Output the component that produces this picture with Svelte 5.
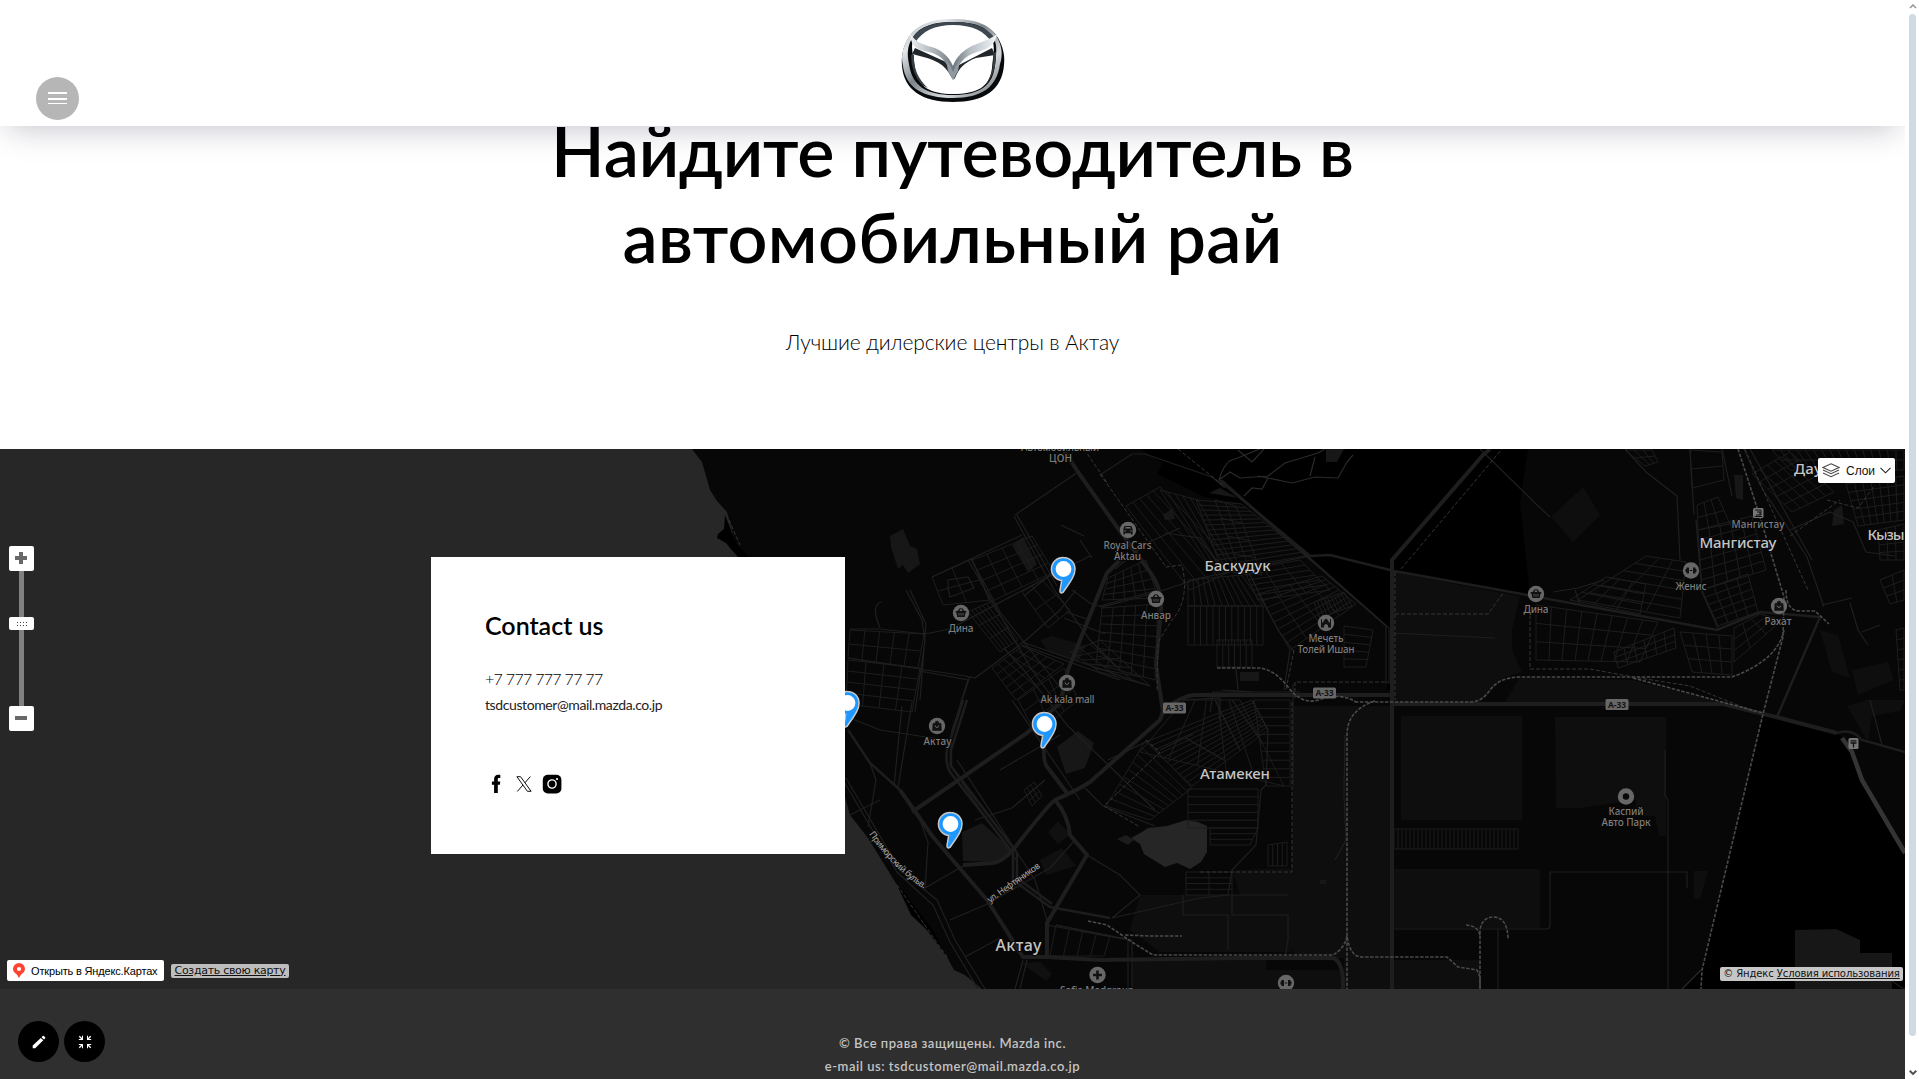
<script lang="ts">
  type Pt = [number, number];

  // Evenly spaced lines across a quadrilateral: n along one direction, m along the other.
  function grid(a: Pt, b: Pt, c: Pt, d: Pt, n: number, m: number): string {
    const mix = (p: Pt, q: Pt, t: number) =>
      `${(p[0] + (q[0] - p[0]) * t).toFixed(1)},${(p[1] + (q[1] - p[1]) * t).toFixed(1)}`;
    let out = '';
    for (let i = 0; i <= n; i++) out += `M${mix(a, b, i / n)}L${mix(d, c, i / n)}`;
    for (let j = 0; j <= m; j++) out += `M${mix(a, d, j / m)}L${mix(b, c, j / m)}`;
    return out;
  }

  const districts = [
    grid([1126, 506], [1160, 487], [1238, 568], [1190, 590], 5, 1),
    grid([1160, 490], [1198, 500], [1236, 570], [1216, 575], 5, 1),
    grid([1196, 500], [1242, 504], [1306, 556], [1222, 570], 1, 14),
    grid([1215, 500], [1236, 506], [1262, 575], [1240, 572], 2, 4),
    grid([1188, 580], [1242, 575], [1263, 606], [1188, 606], 11, 1),
    grid([1188, 606], [1263, 606], [1263, 645], [1188, 645], 12, 1),
    grid([1217, 640], [1252, 640], [1252, 667], [1217, 667], 6, 1),
    grid([1244, 570], [1300, 560], [1330, 590], [1258, 600], 3, 6),
    grid([1258, 594], [1322, 576], [1356, 604], [1290, 650], 4, 8),
    grid([1314, 602], [1344, 592], [1352, 606], [1320, 618], 9, 1),
    grid([1344, 626], [1373, 630], [1366, 667], [1344, 667], 1, 5),
    grid([1102, 608], [1158, 604], [1155, 680], [1096, 664], 5, 7),
    grid([1108, 578], [1146, 560], [1158, 598], [1102, 600], 5, 4),
    grid([1100, 640], [1070, 652], [1100, 672], [1150, 686], 3, 5),
    grid([972, 560], [1032, 536], [1054, 572], [990, 602], 4, 4),
    grid([932, 577], [972, 559], [990, 600], [943, 605], 2, 2),
    grid([968, 612], [990, 602], [1018, 640], [1000, 652], 6, 3),
    grid([1022, 592], [1042, 580], [1070, 610], [1048, 628], 2, 2),
    grid([850, 630], [924, 634], [918, 668], [848, 658], 5, 2),
    grid([848, 660], [920, 668], [912, 712], [846, 704], 4, 4),
    grid([992, 668], [1022, 646], [1064, 664], [1016, 700], 5, 5),
    grid([1018, 700], [1064, 668], [1078, 700], [1036, 734], 3, 3),
    grid([1184, 700], [1240, 700], [1284, 786], [1140, 752], 5, 1),
    grid([1146, 742], [1252, 700], [1268, 730], [1192, 786], 1, 11),
    grid([1146, 740], [1192, 788], [1150, 820], [1106, 806], 1, 9),
    grid([1254, 700], [1290, 700], [1290, 786], [1266, 786], 1, 10),
    grid([1188, 789], [1258, 789], [1258, 828], [1188, 828], 1, 5),
    grid([1210, 828], [1258, 828], [1250, 845], [1210, 845], 1, 3),
    grid([1186, 872], [1232, 872], [1232, 895], [1186, 895], 2, 4),
    grid([1268, 845], [1287, 842], [1287, 866], [1268, 866], 4, 1),
    grid([1024, 790], [1034, 782], [1042, 796], [1032, 806], 3, 3),
    grid([1056, 925], [1110, 936], [1104, 956], [1050, 956], 4, 1),
    grid([1394, 829], [1518, 829], [1518, 849], [1394, 849], 31, 1),
    grid([1536, 605], [1658, 622], [1640, 662], [1536, 660], 8, 3),
    grid([1646, 556], [1686, 562], [1680, 618], [1578, 600], 3, 6),
    grid([1606, 577], [1646, 584], [1640, 614], [1570, 600], 3, 3),
    grid([1614, 652], [1674, 628], [1676, 648], [1618, 668], 6, 3),
    grid([1680, 632], [1732, 636], [1732, 675], [1692, 672], 4, 3),
    grid([1734, 628], [1760, 614], [1782, 620], [1734, 662], 3, 3),
    grid([1697, 505], [1718, 497], [1730, 524], [1698, 530], 3, 2),
    grid([1698, 530], [1752, 516], [1766, 570], [1702, 590], 5, 6),
    grid([1702, 590], [1748, 574], [1758, 612], [1718, 626], 4, 5),
    grid([1690, 450], [1722, 452], [1724, 480], [1692, 488], 1, 2),
    grid([1752, 474], [1790, 452], [1834, 492], [1792, 512], 5, 5),
    grid([1772, 450], [1904, 450], [1904, 470], [1790, 470], 16, 2),
    grid([1846, 484], [1904, 476], [1904, 520], [1858, 526], 7, 5),
    grid([1878, 530], [1904, 524], [1904, 560], [1880, 560], 3, 4),
    grid([1880, 580], [1904, 570], [1904, 600], [1890, 604], 2, 3),
    grid([1896, 630], [1904, 628], [1904, 690], [1900, 690], 1, 6),
    grid([1625, 450], [1652, 450], [1658, 462], [1645, 466], 3, 2),
  ];

  const thinRoads = [
    'M1015 515L1078 472M1014 516L1053 588L1090 640L1118 668M1017 515L1057 586',
    'M932 577L1022 535M968 560L1032 670L1060 708M971 559L1000 612L1070 700',
    'M850 629H880L925 634L950 629L1042 580L1090 556M906 590L922 620L925 640L915 712M910 590L926 624L920 700',
    'M882 602Q870 604 880 628M948 588V580L968 577L974 588L950 597Z',
    'M848 658L965 676L975 678L1026 640L1060 610L1076 590M920 671L968 680L960 705',
    'M1072 590L1090 603L1102 607L1158 592L1200 578L1310 556M1100 606L1158 590',
    'M1022 642L1150 686M1022 645L1120 680M1004 648L1022 668L1068 726L1155 810',
    'M970 676L952 730L950 765L982 812L1016 860',
    'M845 716L880 730L946 740M912 702L898 788M902 706L894 786M870 763L876 780L868 827',
    'M846 778L900 870L937 900L955 940L985 989M843 780L897 872L933 905L950 942L978 989',
    'M920 820L928 842L925 890M925 888L965 865M950 920L985 905L1050 868L1075 840M965 957L1000 938',
    'M957 760L1035 880L1047 920M975 820L1012 808L1045 780M1000 770L1060 735M1012 700L1080 800',
    'M1085 788L1103 806L1155 826M1087 855L1120 875L1140 895L1112 918L1200 898L1228 895L1232 870L1256 845L1261 790L1266 785L1268 730L1252 700',
    'M1047 925L1128 940V989M1132 940V989M1056 925L1132 940M1023 960L1015 989M1027 960L1020 989',
    'M1183 895V915H1228V950M1288 895H1232V915H1288V940L1285 958',
    'M1100 475L1132 454H1145L1212 477L1225 488M1219 480L1386 626V684M1222 480L1389 628V684',
    'M1165 533L1200 538L1222 570L1250 575L1278 630L1294 652M1115 569L1147 543L1180 528',
    'M1390 633L1495 638M1480 449L1536 504L1550 517M1625 449L1646 472L1677 496L1680 560',
    'M1690 449L1694 515M1696 520L1702 592L1718 628M1722 449L1732 496M1744 449L1760 485L1807 557L1824 607M1750 449L1812 560',
    'M1790 530L1830 512L1853 522L1866 552L1895 556M1822 605L1852 598M1850 603L1858 630L1868 645M1862 632L1880 625',
    'M1553 592L1578 588L1604 580M1575 590L1580 605M1392 929H1546Q1550 929 1550 925V872H1687V888M1665 750V795L1668 800V989',
    'M1345 735L1344 794L1346 840L1335 860M1498 929V989M1870 700L1882 745M1892 981L1902 988H1905',
    'M1183 700L1220 698V720M1193 734L1160 750M1108 760L1150 740M1232 700L1262 742M1215 700L1240 750M1186 738L1224 760',
    'M850 815L880 800M1061 525L1084 536M1080 540L1092 558M1024 596L1050 575M1064 618L1105 634M1066 612L1090 620',
    'M1210 712L1213 692H1300M1222 690L1256 692M1293 684V785M1236 669L1238 690M1290 650L1284 690',
  ];

  const wideRoads = [
    'M1063 449L1080 475L1117 527L1150 572Q1163 590 1161 610L1156 665L1163 712L1160 720L1090 782Q1078 790 1055 800Q1047 806 1013 850Q1002 862 993 863L963 865',
    'M912 812L1027 733L1060 703L1068 670L1107 573L1123 557',
    'M900 790L933 837L987 900L1023 957H1047L1100 960L1240 958H1333Q1344 962 1343 989',
    'M1044 747Q1043 763 1048 768L1067 793M1055 800Q1068 815 1070 835L1087 855L1047 923V957',
    'M1163 712Q1180 695 1197 695H1393M1392 704H1723L1780 718L1837 733',
    'M1392 989V560L1483 455L1490 449',
  ];
  const midRoads = [
    'M848 730L870 763L900 790M963 700L947 750Q945 764 950 772L1013 853V880L1050 907L1110 918',
    'M967 700L951 750V766L1017 853V878L1052 904',
    'M1310 556L1330 555L1394 571L1500 590L1717 630L1760 612L1820 617L1777 717',
    'M1219 480L1310 556M1837 733Q1852 728 1862 740L1905 752',
  ];
  const rails = [
    'M1738 449L1760 517L1784 597L1783 637L1763 714L1702 970L1701 989',
    'M1784 630Q1778 660 1732 677H1520Q1500 677 1490 690Q1482 702 1470 702H1355',
    'M1217 668H1260Q1275 670 1288 687Q1302 705 1318 700Q1340 692 1356 702',
    'M1633 678L1763 713M1786 590Q1786 611 1800 611H1815L1829 624M1375 701Q1347 710 1347 735V989',
    'M1088 921L1107 925L1135 944L1153 955H1333Q1345 948 1347 936Q1350 957 1362 957H1447L1458 967L1477 970L1480 977V989',
    'M1480 989V930Q1482 917 1494 917Q1508 918 1508 940M1480 935Q1477 925 1465 925M1125 935L1150 936H1182',
  ];
  const dashes = [
    'M1178 449L1225 487M1084 449L1108 484M1100 474L1166 567L1182 565Q1190 600 1172 620L1158 642L1157 690',
    'M1401 569L1502 449M1395 614H1488L1504 592M1530 615V669H1590L1633 677L1690 686L1755 712',
    'M1292 702V872H1200M1295 698V682H1388M1294 650L1286 690M1745 449L1775 517L1808 590M1790 536L1840 500',
    'M1146 740L1160 752L1104 806L1140 827M897 885L947 957M729 520L740 545M1827 500L1858 508L1875 485M1395 572V700',
  ];

  const pois: { x: number; y: number; icon: string }[] = [
    { x: 961, y: 613, icon: 'basket' }, { x: 1128, y: 530, icon: 'car' }, { x: 1156, y: 599, icon: 'basket' },
    { x: 1067, y: 683, icon: 'bag' }, { x: 937, y: 726, icon: 'bag' }, { x: 1326, y: 623, icon: 'mosque' },
    { x: 1536, y: 594, icon: 'basket' }, { x: 1691, y: 570.5, icon: 'gym' }, { x: 1779, y: 606, icon: 'bag' },
    { x: 1626, y: 796.5, icon: 'dot' }, { x: 1097.5, y: 975, icon: 'plus' }, { x: 1286, y: 983, icon: 'gym' },
  ];
  const smallLabels: [string, number, number, number][] = [
    ['Автомобильный', 1060, 451, 78], ['ЦОН', 1060.5, 461.5, 23],
    ['Дина', 961, 631.5, 25], ['Royal Cars', 1127.5, 549, 48], ['Aktau', 1127.5, 560, 27],
    ['Анвар', 1156, 618.5, 30], ['Ak kala mall', 1067.5, 702.5, 54], ['Актау', 937.5, 745, 28],
    ['Мечеть', 1326, 642, 35], ['Толей Ишан', 1326, 653, 57], ['Дина', 1536, 612.5, 25],
    ['Женис', 1691, 590, 31], ['Рахат', 1778, 624.5, 27], ['Мангистау', 1758, 527.5, 53],
    ['Каспий', 1626, 815, 35], ['Авто Парк', 1626, 826, 49], ['Sofia Medgroup', 1097, 993.5, 74],
  ];
  const bigLabels: [string, number, number, number, number][] = [
    ['Баскудук', 1237.5, 571, 66, 15], ['Мангистау', 1738, 548, 77, 15], ['Атамекен', 1235, 779, 70, 15],
    ['Актау', 1018.5, 951, 46, 16], ['Кызы', 1886, 539.5, 37, 15], ['Даулет', 1820, 473.5, 52, 15],
  ];
  const shields: Pt[] = [[1174.5, 708], [1324.5, 693], [1617, 704.5]];
  const pins: Pt[] = [[1063.5, 569], [847.5, 703], [1044.5, 724], [950.5, 824]];
</script>

<div class="window">
  <main class="page">
    <header class="topbar">
      <button class="burger" aria-label="Меню"><i></i><i></i><i></i></button>
      <svg class="logo" viewBox="0 0 106 86" width="106" height="86" role="img" aria-label="Mazda">
        <defs>
          <linearGradient id="chrome" x1="0" y1="0" x2="1" y2="1">
            <stop offset="0" stop-color="#a9b0b6" /><stop offset=".22" stop-color="#e3e7ea" />
            <stop offset=".45" stop-color="#7d858c" /><stop offset=".7" stop-color="#d7dbde" /><stop offset="1" stop-color="#5c646a" />
          </linearGradient>
          <linearGradient id="wing" x1="0" y1="0" x2="1" y2="0">
            <stop offset="0" stop-color="#eef1f3" /><stop offset=".3" stop-color="#a6adb3" /><stop offset=".5" stop-color="#6f777e" />
            <stop offset=".7" stop-color="#b9c0c6" /><stop offset="1" stop-color="#f2f6f8" />
          </linearGradient>
        </defs>
        <path d="M53 2C78 2 92 9 98 20C103 29 105 37 104 47C102 72 84 84 53 84C22 84 4 72 2 48C1 36 4 27 9 19C17 8 31 2 53 2ZM53 5C33 5 21 11 14 20C10 26 13 37 15 50C18 69 30 76 53 76C77 76 90 69 92 50C93 38 96 27 91 20C84 10 74 5 53 5Z" fill="#08090a" fill-rule="evenodd" />
        <path d="M53 1C78 1 91 8 97 19C102 28 103 37 100 46C97 69 82 80 53 80C23 80 6 70 3 48C0 34 5 26 9 18C17 7 31 1 53 1ZM53 4C34 4 20 8 13 19C7 28 7 36 9 46C12 67 25 77 53 77C81 77 93 67 95 47C96 36 98 27 93 19C86 9 75 4 53 4Z" fill="url(#chrome)" fill-rule="evenodd" />
        <path d="M53 4C33 4 20 9 12 20L15 25C22 13 35 7 53 7C72 7 85 13 92 25L95 20C86 9 74 4 53 4Z" fill="#3e474f" />
        <path d="M12 36L15 30L46 44L53 62L59 47L92 30L95 37L76 40C65 44 59 50 55 60L53 62L49 55C42 43 28 40 12 36Z" fill="#20262b" />
        <path d="M10 15C11 27 14 31 29 34C43 37 48 47 53 59C58 46 64 38 77 34C91 30 95 26 97 16C90 22 77 25 70 29C61 34 56 40 53 48C48 36 38 30 28 28C19 25 14 22 10 15Z" fill="url(#wing)" />
        <path d="M46 42Q51 48 53 54V62L48 53ZM60 42Q55 48 53 54V62L58 53Z" fill="#929aa1" />
        <path d="M11 37Q11 55 22 67L28 70Q13 57 14 37ZM96 34Q97 55 84 69Q95 55 93 35Z" fill="#363d43" />
      </svg>
    </header>

    <section class="intro">
      <h1><span class="first">Найдите путеводитель в</span><span class="second">автомобильный рай</span></h1>
      <p>Лучшие дилерские центры в Актау</p>
    </section>

    <section class="map">
      <svg class="canvas" viewBox="0 449 1905 540" width="1905" height="540">
        <rect y="449" width="1905" height="540" fill="#272727" />
        <path fill="#070707" d="M692 449L702 462L710 490L717 501L727 512L731 526L736 545L748 557L800 740L845 797L850 815L868 838L897 885L902 893L909 910L927 930L947 957L954 970L965 975L982 989H1905V449Z" />
        <path fill="#000" d="M725 515L737 545L749 557H738L730 548L726 543L717 538L718 534L724 529ZM897 885L902 890L915 907L933 930L947 957L927 930L911 915Z" />
        <path fill="#000" d="M1140 449H1528L1520 503L1530 595L1394 571V690H1387V626L1310 557L1240 503L1205 497L1157 474L1162 463L1147 453ZM1394 560V571Z" />
        <path fill="#000" d="M1764 713L1837 733L1846 740L1862 780L1905 853V989H1682L1701 970Z" />
        <g fill="#0e0e0e">
          <path d="M1394 572L1502 593L1520 596L1512 630V650L1522 672L1505 677L1480 702H1394ZM1293 706H1390V989H1344V958H1300L1290 950L1286 895H1240L1232 870L1292 868ZM1140 895H1290V952H1160L1130 930Z" />
          <path d="M1401 716H1522V820H1401ZM1555 717H1666V836H1659L1655 816H1636V800L1580 808H1556ZM1394 869H1540V928H1394ZM1394 960H1480V989H1394ZM1132 960H1266V970H1343V989H1132Z" />
          <path d="M1551 517L1583 487L1600 515L1573 542ZM1520 677L1633 680L1730 704H1504ZM1847 706L1867 700H1905L1900 711L1872 716L1868 742ZM1820 630L1838 635L1850 678L1832 672ZM1852 670L1888 662L1894 680L1858 695ZM1694 871H1708L1700 899H1694Z" />
        </g>
        <g fill="#171717">
          <path d="M890 536L903 529L910 546L917 549L920 564L908 573L903 565L898 569L891 547Z" />
          <path d="M1012 545L1023 537L1037 564L1028 572ZM1057 747L1078 731L1094 743L1085 768L1066 774ZM962 832L982 823L1012 850L1000 862L963 861ZM1163 515L1172 509L1175 519L1165 520ZM1209 493L1220 488L1238 498ZM1326 449H1344L1337 462H1326ZM1734 475H1743V500L1736 498ZM1834 510L1842 505L1844 524L1832 526ZM1320 880H1326V884H1320ZM1795 930L1836 929L1860 940V953H1892V989H1795ZM1240 672H1259V681H1240Z" />
        </g>
        <path fill="#101010" d="M1040 640L1052 636L1086 646L1078 662L1048 651ZM1048 832L1058 821L1070 834L1058 844ZM1040 860L1062 848L1076 866L1046 875ZM1021 963L1040 962L1052 974L1046 981Z" />
        <path fill="#262626" d="M1131 838L1142 832L1148 828L1167 826L1186 820L1198 822L1207 826V852L1201 862L1190 869L1177 863L1165 867L1144 854L1140 844Z" />
        <path fill="#1c1c1c" d="M1117 839L1126 835L1134 840L1128 845Z" />
        <g fill="none">
          {#each districts as d}<path class="block" {d} />{/each}
          {#each thinRoads as d}<path class="thin" {d} />{/each}
          <path class="trail" d="M1219 480Q1225 460 1235 459L1260 449M1219 480L1230 472L1240 478L1268 476L1285 463L1318 453L1325 449M1258 476L1292 483L1315 477L1338 478L1347 462L1353 455M1268 478L1262 489L1252 488L1244 496M1310 476L1315 457M1238 450L1252 462L1264 449" />
          {#each midRoads as d}<path class="mid" {d} />{/each}
          {#each wideRoads as d}<path class="wide" {d} />{/each}
          <path d="M1842 738L1852 752L1862 780L1905 853" stroke="#343434" stroke-width="4.5" />
          {#each dashes as d}<path class="dash" {d} />{/each}
          {#each rails as d}<path class="rail" {d} />{/each}
          <path class="trail" d="M1701 970L1682 989" />
        </g>

        <defs>
          <path id="shore" d="M869 834Q895 872 928 891" />
          <path id="oilers" d="M990 903L1045 864" />
        </defs>
        <g class="street">
          <text><textPath href="#shore" textLength="78">Приморский бульв.</textPath></text>
          <text><textPath href="#oilers" textLength="62">ул. Нефтяников</textPath></text>
        </g>

        {#each pois as p}
          <g transform="translate({p.x} {p.y})">
            <circle r="8.2" fill="#676767" />
            {#if p.icon === 'basket'}
              <path d="M-5.3-2H5.3V-.5H4.6L3.7 4H-3.7L-4.6-.5H-5.3ZM-3.5-2L-1-5L0-4.5L-1.6-2ZM3.5-2L1-5L0-4.5L1.6-2Z" fill="#111" />
              <path d="M-2 0V2.5M0 0V2.5M2 0V2.5" stroke="#676767" stroke-width=".7" />
            {:else if p.icon === 'bag'}
              <path d="M-4-2.5H4L4.4 4.5H-4.4ZM-2-2.5Q-2-5 0-5Q2-5 2-2.5" fill="#111" stroke="#111" stroke-width=".6" />
              <path d="M-1.8-.5Q-1.5 1.5 0 1.5Q1.5 1.5 1.8-.5" stroke="#676767" fill="none" />
            {:else if p.icon === 'car'}
              <path d="M-3.5-4H3.5L4.6-1V4.5H3V3.2H-3V4.5H-4.6V-1Z" fill="#111" />
              <path d="M-3-1.4L-2.3-3H2.3L3-1.4ZM-3.8.4H-2V1.6H-3.8ZM2 .4H3.8V1.6H2Z" fill="#676767" />
            {:else if p.icon === 'mosque'}
              <path d="M-5-4H-4V-.5H-3Q-2.500-3 0-4.500Q2.500-3 3-.5H4V-4H5V4.500H2V2.500Q0-.5-2 2.500V4.500H-5Z" fill="#111" />
            {:else if p.icon === 'gym'}
              <path d="M-5.5-1.5H-4.5V-3H-2V3H-4.5V1.5H-5.5ZM5.5-1.5H4.5V-3H2V3H4.5V1.5H5.5ZM-1.2-.6H1.2V.6H-1.2Z" fill="#111" />
            {:else if p.icon === 'plus'}
              <path d="M-4.5 0H4.5M0-4.5V4.5" stroke="#111" stroke-width="2.6" />
            {:else}
              <circle r="3.2" fill="#080808" />
            {/if}
          </g>
        {/each}
        <rect x="1753" y="508" width="10.5" height="10" rx="1.5" fill="#777" />
        <path d="M1755 510H1761V515H1756M1754.500 516.500H1762M1757 512H1760V515" stroke="#111" fill="none" />
        <rect x="1848.500" y="738" width="10" height="11" rx="1.500" fill="#777" />
        <path d="M1850.500 740.800H1856.500M1850.500 743H1856.500M1853.500 743V747.500" stroke="#111" stroke-width="1.300" />

        <g class="small">
          {#each smallLabels as [t, x, y, w]}<text {x} {y} textLength={w}>{t}</text>{/each}
        </g>
        <g class="big">
          {#each bigLabels as [t, x, y, w, s]}<text {x} {y} textLength={w} font-size={s}>{t}</text>{/each}
        </g>
        {#each shields as [x, y]}
          <rect x={x - 11.5} y={y - 5.5} width="23" height="11" rx="1.500" fill="#676767" />
          <text class="shield" {x} y={y + 3.200} textLength="18">A-33</text>
        {/each}

        {#each pins as [x, y]}
          <g transform="translate({x} {y})">
            <path d="M0-10.800A10.800 10.800 0 0 1 10.800 0C10.800 7 5 14-1 22.800Q-3.200 24-2.700 21Q-1.500 15-1 10.800A10.800 10.800 0 0 1 0-10.800Z" fill="#1e98ff" stroke="#c9c9c9" stroke-width="3" paint-order="stroke" />
            <circle r="7.900" fill="#fff" />
          </g>
        {/each}
      </svg>

      <aside class="card">
        <h2>Contact us</h2>
        <div class="phone">+7 777 777 77 77</div>
        <div class="mail">tsdcustomer@mail.mazda.co.jp</div>
        <div class="social">
          <svg viewBox="0 0 20 20" width="20" height="20"><path d="M8.100 19V10.800H5.900V7.500H8.100V5.200C8.100 2.400 9.600.8 12.200.8H14.300V4.100H12.900C12 4.100 11.800 4.500 11.800 5.300V7.500H14.300L13.900 10.800H11.800V19Z" /></svg>
          <svg viewBox="0 0 20 20" width="20" height="20"><path d="M2.900 2.700H6.600L17.100 17.300H13.400ZM16.400 2.500L10.800 8.900M9.100 10.900L3.200 17.500" fill="none" stroke="#111" stroke-width="1" /></svg>
          <svg viewBox="0 0 20 20" width="20" height="20"><rect x=".8" y=".8" width="18.600" height="18.600" rx="5" /><circle cx="10" cy="10" r="4.100" fill="none" stroke="#fff" stroke-width="1.400" /><circle cx="15" cy="5" r="1.100" fill="#fff" /></svg>
        </div>
      </aside>

      <div class="zoomer">
        <button aria-label="Приблизить"><svg viewBox="0 0 12 12" width="12" height="12"><path d="M6 0V12M0 6H12" stroke="#686868" stroke-width="4" /></svg></button>
        <span class="track"><span class="handle"><svg viewBox="0 0 10 4" width="10" height="4"><path d="M0 .5H10M0 3.500H10" stroke="#444" stroke-dasharray="1 2" /></svg></span></span>
        <button aria-label="Отдалить"><svg viewBox="0 0 12 12" width="12" height="12"><path d="M0 6H12" stroke="#686868" stroke-width="4" /></svg></button>
      </div>

      <button class="layers">
        <svg viewBox="0 0 18 15" width="18" height="15"><path d="M9 .8L17 4.500L9 8.200L1 4.500ZM1 7L9 10.700L17 7M1 10L9 13.700L17 10" fill="none" stroke="#4d4d4d" stroke-width="1.200" /></svg>
        <span>Слои</span>
        <svg viewBox="0 0 11 7" width="11" height="7"><path d="M.5.900L5.500 5.800L10.500.900" fill="none" stroke="#222" stroke-width="1.100" /></svg>
      </button>

      <div class="links">
        <a class="open" href="#map"><svg viewBox="0 0 12 15" width="12" height="15"><path d="M6 0A6 6 0 0 1 12 6C12 10 7.500 10.500 6.500 14.500H5.500C4.500 10.500 0 10 0 6A6 6 0 0 1 6 0Z" fill="#f43" /><circle cx="6" cy="6" r="2.100" fill="#fff" /></svg><span>Открыть в Яндекс.Картах</span></a>
        <a class="create" href="#create">Создать свою карту</a>
      </div>
      <div class="terms">© Яндекс <a href="#terms">Условия использования</a></div>
    </section>

    <footer>
      <p>© Все права защищены. Mazda inc.</p>
      <p>e-mail us: tsdcustomer@mail.mazda.co.jp</p>
      <div class="tools">
        <button aria-label="Редактировать"><svg viewBox="0 0 14 14" width="14" height="14"><path d="M.7 13.300V10.600L8.800 2.900L11.300 5.300L3.200 13.300ZM9.600 2.200L10.600 1.100Q11.300.500 12.100 1.200L13 2.100Q13.700 2.900 13 3.600L12 4.600Z" fill="#fff" /></svg></button>
        <button aria-label="Свернуть"><svg viewBox="0 0 14 14" width="14" height="14"><path d="M5 .8V5H.8V4H3L.8 1.800L1.800.8L4 3V.8ZM9 .8V5H13.200V4H11L13.200 1.800L12.200.8L10 3V.8ZM5 13.200V9H.8V10H3L.8 12.200L1.800 13.200L4 11V13.200ZM9 13.200V9H13.200V10H11L13.200 12.200L12.200 13.200L10 11V13.200Z" fill="#fff" /></svg></button>
      </div>
    </footer>
  </main>

  <div class="scrollbar">
    <svg viewBox="0 0 8 5" width="8" height="5"><path d="M1 4L4 1L7 4" fill="none" stroke="#999" stroke-width="1.600" /></svg>
    <span class="thumb"></span>
    <svg viewBox="0 0 8 5" width="8" height="5"><path d="M.7.800L4 4L7.300.800" fill="none" stroke="#505050" stroke-width="1.900" /></svg>
  </div>
</div>

<style>
  :global(body) { margin: 0; overflow: hidden; background: #fff; }
  .window { display: flex; width: 1919px; height: 1079px; overflow: hidden; font-family: Lato, 'Open Sans', sans-serif; color: #000; }
  .page { display: flex; flex-direction: column; width: 1905px; height: 1079px; overflow: hidden; }
  button { border: 0; padding: 0; font: inherit; display: flex; align-items: center; justify-content: center; }
  a { color: inherit; }

  .topbar { position: relative; z-index: 2; flex: none; height: 126px; box-sizing: border-box; display: grid; grid-template-columns: 36px 1fr; background: #fff; box-shadow: 0 10px 30px -8px rgba(20, 20, 50, .26); }
  .burger { grid-column: 2; grid-row: 1; align-self: end; box-sizing: border-box; margin-bottom: 6px; padding-bottom: 1px; width: 43px; height: 43px; border-radius: 50%; background: #b6b6b6; flex-direction: column; gap: 3.500px; }
  .burger i { width: 19px; height: 2px; background: #fff; }
  .burger i:last-child { height: 1px; }
  .logo { grid-column: 1 / 3; grid-row: 1; justify-self: center; margin-top: 18px; }

  .intro { flex: none; height: 323px; display: flex; flex-direction: column; align-items: center; text-align: center; }
  h1 { display: flex; flex-direction: column; align-items: center; margin: -19px 0 0; font-size: 70px; line-height: 86px; font-weight: 600; white-space: nowrap; }
  .first { letter-spacing: -.2px; }
  .second { letter-spacing: .300px; }
  .intro p { margin: 45px 0 0; font-size: 21px; line-height: 36px; font-weight: 300; letter-spacing: -.1px; white-space: nowrap; }

  .map { position: relative; flex: none; height: 540px; overflow: hidden; background: #272727; }
  .canvas { display: block; }
  .block { stroke: #1d1d1d; stroke-width: 1; }
  .thin { stroke: #1f1f1f; stroke-width: 1.200; }
  .trail { stroke: #2a2a2a; stroke-width: 1.200; }
  .mid { stroke: #1d1d1d; stroke-width: 2.500; }
  .wide { stroke: #1e1e1e; stroke-width: 4; stroke-linejoin: round; }
  .dash { stroke: #353535; stroke-width: 1; stroke-dasharray: 4 2; }
  .rail { stroke: #4a4a4a; stroke-width: 1.600; stroke-dasharray: 3.500 1.500; }
  .small text { font: 500 10px 'Noto Sans', sans-serif; fill: #7d7d7d; text-anchor: middle; stroke: #080808; stroke-width: 2px; paint-order: stroke; }
  .big text { font-family: 'Noto Sans', sans-serif; font-weight: 500; fill: #c4c4c4; text-anchor: middle; stroke: #080808; stroke-width: 2px; paint-order: stroke; }
  .street text { font: 9px 'Noto Sans', sans-serif; fill: #aaa; }
  .shield { font: bold 8.500px 'Noto Sans', sans-serif; fill: #151515; text-anchor: middle; }

  .card { position: absolute; left: 431px; top: 108px; width: 414px; height: 297px; box-sizing: border-box; padding: 51px 54px; background: #fff; }
  h2 { margin: 0; font-size: 25px; line-height: 34px; font-weight: 600; white-space: nowrap; }
  .phone { margin-top: 25px; font-size: 16px; line-height: 24px; font-weight: 300; letter-spacing: -.7px; white-space: nowrap; }
  .mail { margin-top: 2px; font-size: 14px; line-height: 24px; font-weight: 400; letter-spacing: -.4px; color: #222; white-space: nowrap; }
  .social { display: flex; gap: 8px; margin: 57px 0 0 1px; }

  .zoomer { position: absolute; left: 9px; top: 97px; width: 25px; display: flex; flex-direction: column; align-items: center; }
  .zoomer button { width: 25px; height: 25px; background: #fff; border-radius: 2px; }
  .zoomer button svg { margin: 0 1px 1px 0; }
  .track { width: 5px; height: 135px; background: #808080; display: flex; justify-content: center; }
  .handle { flex: none; margin-top: 46px; width: 25px; height: 13px; border-radius: 2px; background: #fff; display: flex; align-items: center; justify-content: center; }

  .layers { position: absolute; left: 1818px; top: 9px; width: 77px; height: 25px; gap: 6px; background: #fff; border-radius: 2px; font: 12px 'Liberation Sans', sans-serif; color: #111; }
  .layers span { margin-right: -1px; letter-spacing: -.1px; }

  .links { position: absolute; left: 7px; top: 511px; display: flex; align-items: center; gap: 7px; white-space: nowrap; }
  .open { display: flex; align-items: center; gap: 6px; width: 157px; height: 21px; box-sizing: border-box; padding-left: 6px; background: #fff; border-radius: 2px; text-decoration: none; font: 11px 'Liberation Sans', sans-serif; letter-spacing: -.16px; color: #000; }
  .create { width: 118px; height: 14px; border-radius: 2px; background: #bdbdbd; text-align: center; font: 11px/13px 'DejaVu Sans', sans-serif; letter-spacing: -.3px; color: #111; }
  .terms { position: absolute; left: 1720px; top: 518px; width: 183px; height: 14px; border-radius: 2px; background: #c6c6c6; text-align: center; white-space: nowrap; font: 10px/14px 'DejaVu Sans', sans-serif; letter-spacing: -.1px; color: #111; }

  footer { position: relative; flex: 1; background: #2f2f2f; color: #c4c4c4; text-align: center; font-size: 13px; line-height: 23px; font-weight: 600; letter-spacing: .53px; padding-top: 43px; }
  footer p { margin: 0; }
  .tools { position: absolute; left: 18px; top: 32px; display: flex; gap: 5px; }
  .tools button { width: 41px; height: 41px; border-radius: 50%; background: #000; }

  .scrollbar { width: 14px; box-sizing: border-box; padding: 4px 3px 4px 4px; display: flex; flex-direction: column; align-items: center; background: #fff; }
  .scrollbar svg { flex: none; }
  .thumb { width: 7px; height: 1022px; margin: 5px 0 34px; border-radius: 4px; background: #cfdae3; }
</style>
